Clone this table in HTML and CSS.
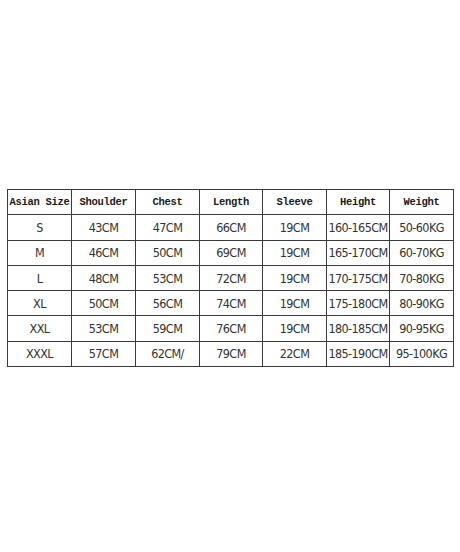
FILE: index.html
```html
<!DOCTYPE html>
<html>
<head>
<meta charset="utf-8">
<link rel="stylesheet" href="styles.css">
</head>
<body>
<div class="page">
  <table class="size-table">
    <colgroup>
      <col class="c1"><col class="c2"><col class="c3"><col class="c4"><col class="c5"><col class="c6"><col class="c7">
    </colgroup>
    <thead>
      <tr><th>Asian Size</th><th>Shoulder</th><th>Chest</th><th>Length</th><th>Sleeve</th><th>Height</th><th>Weight</th></tr>
    </thead>
    <tbody>
      <tr><td>S</td><td>43CM</td><td>47CM</td><td>66CM</td><td>19CM</td><td>160-165CM</td><td>50-60KG</td></tr>
      <tr><td>M</td><td>46CM</td><td>50CM</td><td>69CM</td><td>19CM</td><td>165-170CM</td><td>60-70KG</td></tr>
      <tr><td>L</td><td>48CM</td><td>53CM</td><td>72CM</td><td>19CM</td><td>170-175CM</td><td>70-80KG</td></tr>
      <tr><td>XL</td><td>50CM</td><td>56CM</td><td>74CM</td><td>19CM</td><td>175-180CM</td><td>80-90KG</td></tr>
      <tr><td>XXL</td><td>53CM</td><td>59CM</td><td>76CM</td><td>19CM</td><td>180-185CM</td><td>90-95KG</td></tr>
      <tr><td>XXXL</td><td>57CM</td><td>62CM/</td><td>79CM</td><td>22CM</td><td>185-190CM</td><td>95-100KG</td></tr>
    </tbody>
  </table>
</div>
</body>
</html>
```
FILE: styles.css
```css
html, body {
  margin: 0;
  padding: 0;
  background: #ffffff;
}
.page {
  width: 460px;
  height: 552px;
  box-sizing: border-box;
  padding: 189px 7px 0 7px;
}
.size-table {
  width: 446px;
  border-collapse: collapse;
  table-layout: fixed;
}
.c1, .c2, .c3, .c5, .c7 { width: 64px; }
.c4, .c6 { width: 63px; }
.size-table th,
.size-table td {
  border: 1.3px solid #3a3a3a;
  height: 24.3px;
  padding: 0;
  text-align: center;
  vertical-align: middle;
  white-space: nowrap;
  overflow: hidden;
}
.size-table th {
  font-family: "Liberation Mono", "DejaVu Sans Mono", monospace;
  font-size: 10.5px;
  font-weight: bold;
  color: #1a1a1a;
  letter-spacing: -0.3px;
}
.size-table td {
  font-family: "DejaVu Sans Condensed", "DejaVu Sans", sans-serif;
  font-stretch: condensed;
  font-size: 12.5px;
  letter-spacing: -0.6px;
  color: #333333;
}
```
